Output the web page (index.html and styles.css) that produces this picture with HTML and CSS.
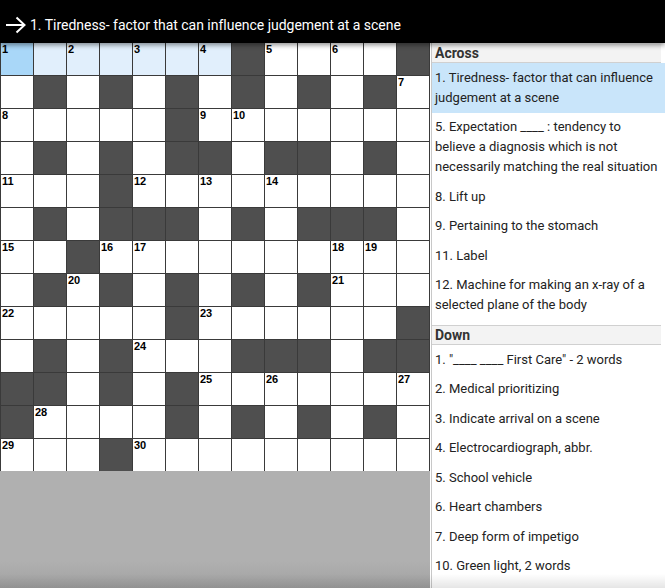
FILE: index.html
```html
<!DOCTYPE html>
<html>
<head>
<meta charset="utf-8">
<link rel="stylesheet" href="styles.css">
</head>
<body>
<div class="app">
  <header class="top">
    <svg class="arrow" width="22" height="18" viewBox="0 0 22 18"><path d="M1 9 H19 M11.5 1.5 L19.5 9 L11.5 16.5" fill="none" stroke="#fff" stroke-width="2"/></svg>
    <span class="cur">1. Tiredness- factor that can influence judgement at a scene</span>
  </header>
  <div class="main">
    <div class="board">
      <div class="grid">
        <div class="c s"><i>1</i></div><div class="c h"></div><div class="c h"><i>2</i></div><div class="c h"></div><div class="c h"><i>3</i></div><div class="c h"></div><div class="c h"><i>4</i></div><div class="c b"></div><div class="c"><i>5</i></div><div class="c"></div><div class="c"><i>6</i></div><div class="c"></div><div class="c b"></div>
        <div class="c"></div><div class="c b"></div><div class="c"></div><div class="c b"></div><div class="c"></div><div class="c b"></div><div class="c"></div><div class="c b"></div><div class="c"></div><div class="c b"></div><div class="c"></div><div class="c b"></div><div class="c"><i>7</i></div>
        <div class="c"><i>8</i></div><div class="c"></div><div class="c"></div><div class="c"></div><div class="c"></div><div class="c b"></div><div class="c"><i>9</i></div><div class="c"><i>10</i></div><div class="c"></div><div class="c"></div><div class="c"></div><div class="c"></div><div class="c"></div>
        <div class="c"></div><div class="c b"></div><div class="c"></div><div class="c b"></div><div class="c"></div><div class="c b"></div><div class="c b"></div><div class="c"></div><div class="c b"></div><div class="c b"></div><div class="c"></div><div class="c b"></div><div class="c"></div>
        <div class="c"><i>11</i></div><div class="c"></div><div class="c"></div><div class="c b"></div><div class="c"><i>12</i></div><div class="c"></div><div class="c"><i>13</i></div><div class="c"></div><div class="c"><i>14</i></div><div class="c"></div><div class="c"></div><div class="c"></div><div class="c"></div>
        <div class="c"></div><div class="c b"></div><div class="c"></div><div class="c b"></div><div class="c b"></div><div class="c b"></div><div class="c"></div><div class="c b"></div><div class="c"></div><div class="c b"></div><div class="c b"></div><div class="c b"></div><div class="c"></div>
        <div class="c"><i>15</i></div><div class="c"></div><div class="c b"></div><div class="c"><i>16</i></div><div class="c"><i>17</i></div><div class="c"></div><div class="c"></div><div class="c"></div><div class="c"></div><div class="c"></div><div class="c"><i>18</i></div><div class="c"><i>19</i></div><div class="c"></div>
        <div class="c"></div><div class="c b"></div><div class="c"><i>20</i></div><div class="c b"></div><div class="c"></div><div class="c b"></div><div class="c"></div><div class="c b"></div><div class="c"></div><div class="c b"></div><div class="c"><i>21</i></div><div class="c"></div><div class="c"></div>
        <div class="c"><i>22</i></div><div class="c"></div><div class="c"></div><div class="c"></div><div class="c"></div><div class="c b"></div><div class="c"><i>23</i></div><div class="c"></div><div class="c"></div><div class="c"></div><div class="c"></div><div class="c"></div><div class="c b"></div>
        <div class="c"></div><div class="c b"></div><div class="c"></div><div class="c b"></div><div class="c"><i>24</i></div><div class="c"></div><div class="c"></div><div class="c b"></div><div class="c b"></div><div class="c b"></div><div class="c"></div><div class="c b"></div><div class="c b"></div>
        <div class="c b"></div><div class="c b"></div><div class="c"></div><div class="c b"></div><div class="c"></div><div class="c b"></div><div class="c"><i>25</i></div><div class="c"></div><div class="c"><i>26</i></div><div class="c"></div><div class="c"></div><div class="c"></div><div class="c"><i>27</i></div>
        <div class="c b"></div><div class="c"><i>28</i></div><div class="c"></div><div class="c"></div><div class="c"></div><div class="c b"></div><div class="c"></div><div class="c b"></div><div class="c"></div><div class="c b"></div><div class="c"></div><div class="c b"></div><div class="c"></div>
        <div class="c"><i>29</i></div><div class="c"></div><div class="c"></div><div class="c b"></div><div class="c"><i>30</i></div><div class="c"></div><div class="c"></div><div class="c"></div><div class="c"></div><div class="c"></div><div class="c"></div><div class="c"></div><div class="c"></div>
      </div>
    </div>
    <aside class="clues">
      <div class="sec">Across</div>
      <div class="clue on">1. Tiredness- factor that can influence judgement at a scene</div>
      <div class="clue">5. Expectation ____ : tendency to believe a diagnosis which is not necessarily matching the real situation</div>
      <div class="clue">8. Lift up</div>
      <div class="clue">9. Pertaining to the stomach</div>
      <div class="clue">11. Label</div>
      <div class="clue">12. Machine for making an x-ray of a selected plane of the body</div>
      <div class="sec down">Down</div>
      <div class="clue">1. "____ ____ First Care" - 2 words</div>
      <div class="clue">2. Medical prioritizing</div>
      <div class="clue">3. Indicate arrival on a scene</div>
      <div class="clue">4. Electrocardiograph, abbr.</div>
      <div class="clue">5. School vehicle</div>
      <div class="clue">6. Heart chambers</div>
      <div class="clue">7. Deep form of impetigo</div>
      <div class="clue">10. Green light, 2 words</div>
    </aside>
    <div class="fade"></div>
  </div>
</div>
</body>
</html>
```
FILE: styles.css
```css
html, body {
  margin: 0;
  padding: 0;
  background: #fff;
}
body {
  width: 665px;
  height: 588px;
  overflow: hidden;
  font-family: Roboto, "Liberation Sans", Arial, sans-serif;
}
.app {
  display: flex;
  flex-direction: column;
  height: 588px;
}
.top {
  height: 43px;
  flex: 0 0 43px;
  background: #000;
  color: #fff;
  display: flex;
  align-items: center;
  padding: 7px 0 0 5px;
  box-sizing: border-box;
  box-shadow: 0 2px 5px rgba(0,0,0,0.45);
  position: relative;
  z-index: 2;
}
.arrow {
  margin-right: 3px;
}
.cur {
  font-size: 14px;
  letter-spacing: -0.02px;
}
.main {
  flex: 1;
  display: flex;
  position: relative;
  overflow: hidden;
}
.board {
  width: 430px;
  flex: 0 0 430px;
  background: linear-gradient(#9a9a9a 0px, #b0b0b0 8px, #b0b0b0 95%, #a2a2a2 100%);
}
.grid {
  display: grid;
  grid-template-columns: repeat(13, 32px);
  grid-auto-rows: 32px;
  gap: 1px;
  padding: 0 1px 0 1px;
  background: #3a3a3a;
  width: 430px;
  box-sizing: border-box;
}
.c {
  background: #fff;
  position: relative;
}
.c.b { background: #4f4f4f; }
.c.h { background: #e1effc; }
.c.s { background: #a9d7f8; }
.c i {
  position: absolute;
  left: 1px;
  top: 0px;
  font-style: normal;
  font-weight: bold;
  font-family: "Liberation Sans", Arial, sans-serif;
  font-size: 11px;
  line-height: 12px;
  color: #000;
}
.clues {
  flex: 1;
  border-left: 1px solid #c8c8c8;
  margin-left: 1px;
  padding-top: 1px;
  overflow: hidden;
  color: #222;
}
.sec {
  font-weight: bold;
  font-size: 14px;
  color: #333;
  background: #f3f3f3;
  border-bottom: 1px solid #d0d0d0;
  line-height: 18px;
  padding: 0 3px;
  margin-right: 4px;
}
.sec.down {
  border-top: 1px solid #d0d0d0;
  margin-top: 5px;
  line-height: 18px;
}
.clue {
  font-size: 13px;
  line-height: 20px;
  padding: 4.75px 3px 4.75px 3px;
}
.clue.on {
  background: #c9e5fa;
}
.fade {
  position: absolute;
  left: 0;
  right: 0;
  bottom: 0;
  height: 14px;
  background: linear-gradient(rgba(0,0,0,0), rgba(0,0,0,0.1));
  pointer-events: none;
}
```
